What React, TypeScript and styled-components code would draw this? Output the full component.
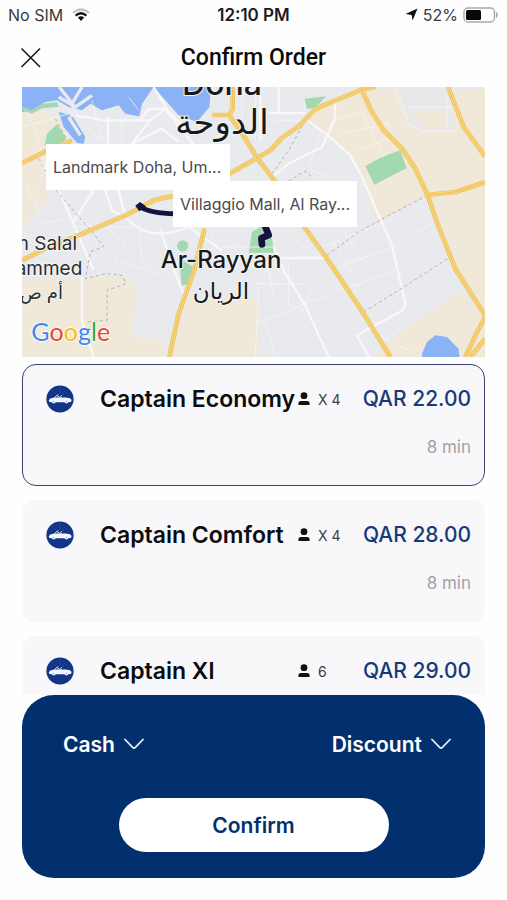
import React, { useState } from "react";
import styled, { createGlobalStyle } from "styled-components";

const NAVY = "#02306e";
const UI = `Inter, "Open Sans", sans-serif`;

const GlobalStyle = createGlobalStyle`
  *, *::before, *::after { box-sizing: border-box; }
  body { margin: 0; background: #fff; font-family: ${UI}; color: #0c0c0f; }
  button, select, input { font: inherit; color: inherit; }
`;

const Screen = styled.div`
  display: flex;
  flex-direction: column;
  height: 100vh;
  padding-bottom: 22px;
  background: #fefefe;
`;

const StatusBar = styled.div`
  display: grid;
  grid-template-columns: 1fr auto 1fr;
  align-items: center;
  height: 29px;
  padding: 0 8px;
  font-size: 16px;
  color: #3a3a3c;
`;

const StatusSide = styled.div<{ $end?: boolean }>`
  display: flex;
  align-items: center;
  justify-content: ${(p) => (p.$end ? "flex-end" : "flex-start")};
  gap: ${(p) => (p.$end ? 5 : 9)}px;
`;

const Clock = styled.time`
  font-size: 17px;
  font-weight: 600;
  color: #1c1c1e;
`;

const Header = styled.header`
  display: grid;
  grid-template-columns: 24px 1fr 24px;
  align-items: center;
  height: 58px;
  padding: 0 19px;
`;

const CloseButton = styled.button`
  display: flex;
  padding: 0;
  border: 0;
  background: none;
  cursor: pointer;
`;

const Title = styled.h1`
  margin: 0;
  font-family: Roboto, sans-serif;
  font-size: 23px;
  font-weight: 500;
  line-height: 28px;
  text-align: center;
  color: #0a0a0a;
`;

const MapFrame = styled.section`
  position: relative;
  flex: none;
  height: 270px;
  margin: 0 22px;
  overflow: hidden;
  background: #e8eaed;

  > svg {
    display: block;
    width: 100%;
    height: 100%;
  }
`;

const PlaceTag = styled.button<{ $left: number; $top: number }>`
  position: absolute;
  left: ${(p) => p.$left}px;
  top: ${(p) => p.$top}px;
  width: 184px;
  height: 46px;
  padding: 0 7px;
  border: 0;
  background: #fff;
  font-size: 16px;
  text-align: left;
  white-space: nowrap;
  color: #4a4a4c;
`;

const RideList = styled.fieldset`
  display: flex;
  flex: 1;
  flex-direction: column;
  gap: 14px;
  min-width: 0;
  min-height: 0;
  margin: 0 22px;
  padding: 7px 0 0;
  border: 0;
  overflow-y: auto;
  scrollbar-width: none;
`;

const RideCard = styled.label<{ $selected: boolean }>`
  position: relative;
  display: grid;
  flex: none;
  grid-template-columns: 28px 224px 1fr auto;
  align-content: start;
  align-items: center;
  height: 122px;
  padding: 18px 13px 0 23px;
  border: 1px solid ${(p) => (p.$selected ? "#3c4374" : "#f8f8fb")};
  border-radius: ${(p) => (p.$selected ? 14 : 12)}px;
  background: #f8f8fb;
  cursor: pointer;
`;

const RideRadio = styled.input`
  position: absolute;
  inset: 0;
  margin: 0;
  opacity: 0;
`;

const RideName = styled.span`
  padding-left: 26px;
  font-size: 23px;
  font-weight: 600;
  line-height: 32px;
  white-space: nowrap;
`;

const Seats = styled.span`
  display: flex;
  align-items: center;
  gap: 8px;
  font-size: 14px;
  color: #3d3d40;
`;

const Price = styled.span`
  font-size: 21px;
  font-weight: 500;
  line-height: 32px;
  white-space: nowrap;
  color: #173a78;
`;

const Eta = styled.span`
  grid-column: 4;
  margin-top: 20px;
  font-size: 17px;
  line-height: 24px;
  text-align: right;
  color: #a3a3a7;
`;

const Checkout = styled.section`
  display: flex;
  flex: none;
  flex-direction: column;
  align-items: center;
  gap: 39px;
  margin: 0 22px;
  padding: 34px 0 26px;
  border-radius: 32px;
  background: ${NAVY};
  color: #fff;
`;

const Options = styled.div`
  display: flex;
  align-self: stretch;
  justify-content: space-between;
  padding: 0 33px 0 41px;
`;

const Picker = styled.label`
  display: flex;
  align-items: center;
  gap: 8px;
`;

const PickerSelect = styled.select`
  appearance: none;
  field-sizing: content;
  height: 30px;
  padding: 0;
  border: 0;
  background: none;
  font-size: 21px;
  font-weight: 600;
  color: #fff;

  option { color: #0c0c0f; }
`;

const ConfirmButton = styled.button`
  width: 70%;
  max-width: 270px;
  height: 54px;
  border: 0;
  border-radius: 27px;
  background: #fff;
  font-size: 21px;
  font-weight: 600;
  color: ${NAVY};
  cursor: pointer;
`;

const WifiIcon = () => (
  <svg width="18" height="14" viewBox="0 0 18 14" fill="none" aria-hidden="true">
    <path d="M1 5 Q9 -2 17 5" stroke="#c4c4c6" strokeWidth="2.2" />
    <path d="M3.6 7.6 Q9 2.9 14.4 7.6" stroke="#111" strokeWidth="2.2" />
    <path d="M5.8 9.6 Q9 7 12.2 9.6 L9 13z" fill="#111" />
  </svg>
);

const LocationIcon = () => (
  <svg width="13" height="13" viewBox="0 0 13 13" aria-hidden="true">
    <path d="M12.5.5 7.6 12.6 6.6 6.9.5 6z" fill="#111" />
  </svg>
);

const BatteryIcon = () => (
  <svg width="36" height="16" viewBox="0 0 36 16" fill="none" aria-hidden="true">
    <rect x="1" y="1" width="30.5" height="14" rx="4" stroke="#a9a9ac" strokeWidth="1.4" />
    <rect x="3" y="3" width="15" height="10" rx="1.5" fill="#080808" />
    <path d="M33.5 5.5q1.8 2.5 0 5z" fill="#a9a9ac" stroke="#a9a9ac" />
  </svg>
);

const CloseIcon = () => (
  <svg width="24" height="24" viewBox="0 0 24 24" fill="none" aria-hidden="true">
    <path d="M2.5 2.5 21 21M21 2.5 2.5 21" stroke="#1b1b1b" strokeWidth="1.6" />
  </svg>
);

const ChevronIcon = () => (
  <svg width="22" height="14" viewBox="0 0 22 14" fill="none" aria-hidden="true">
    <path d="M2 2.5 9.6 10.4Q11 11.6 12.4 10.4L20 2.5" stroke="#e6edf8" strokeWidth="1.8" strokeLinecap="round" />
  </svg>
);

const PersonIcon = () => (
  <svg width="12" height="14" viewBox="0 0 12 14" fill="#111" aria-hidden="true">
    <circle cx="6" cy="3.7" r="3.4" />
    <path d="M.4 13v-1.6Q.4 8.9 3 8.9h6q2.600 0 2.600 2.500V13z" />
  </svg>
);

const CarBadge = () => (
  <svg width="28" height="28" viewBox="0 0 28 28" aria-hidden="true">
    <circle cx="14" cy="14" r="13.6" fill="#123587" />
    <path d="M5 4.5 10 9.500M14 1v8M19 6l-3 4" stroke="#26499c" strokeWidth=".7" />
    <path d="M8.400 12.800Q10 10.300 12.500 9.900M14.200 12.800 15.700 10.300M11.500 12.500l1-1.400 1 1.400" fill="none" stroke="#f4f7ff" strokeWidth=".9" />
    <path
      d="M2.800 15.400 4.200 13.500 8.200 12.500 19 12.600Q23.800 12.900 25.200 14.300L25.500 16.400 23.400 17.300H4.700Q2.800 16.900 2.800 15.400z"
      fill="#f4f7ff"
    />
    <circle cx="7.800" cy="16.500" r="1.900" fill="#f4f7ff" />
    <circle cx="20.400" cy="16.500" r="1.900" fill="#f4f7ff" />
    <circle cx="7.800" cy="16.700" r=".6" fill="#6f86bd" />
    <circle cx="20.400" cy="16.700" r=".6" fill="#6f86bd" />
  </svg>
);

const SAND = "#f0e8d8";
const WATER = "#8ab2f5";
const PARK = "#a3d9b0";

const highways = [
  "M0 228 L78 190 150 160",
  "M0 520 L80 480 175 443 310 385 400 338 455 326",
  "M620 262 L705 213 745 190 780 152 830 118 880 66 940 40 1020 8 1060 0",
  "M1015 0 L1050 75 1085 130 1140 185 1180 245 1215 320 1250 420 1300 545 1350 625 1389 685",
  "M1278 0 L1325 120 1389 208",
  "M1215 324 L1300 315 1389 286",
  "M632 0 L632 65 622 84 570 84",
  "M622 84 L670 155 705 213 765 290 850 425 915 515 1025 680 1105 810",
  "M548 425 L515 555 470 680 442 810",
  "M1389 690 L1365 735 1330 810",
  "M1389 755 L1345 810",
];

const streets = [
  "M160 85 L250 100 385 100 430 66 480 130 530 190",
  "M385 100 L330 170M430 66 L380 66 355 100M258 90V170",
  "M395 0 L440 75 500 130M330 170 L420 125 470 165",
  "M60 230 L120 330 180 470 215 550M180 570V700 L215 810",
  "M290 310 L310 390 Q380 470 500 420 L600 490M415 430 L465 570 485 620",
  "M250 310 L270 370 310 390M215 310 L150 410",
  "M850 95 L930 155 985 205 1020 270 1070 385 1110 475 1150 650 1145 668 1005 745 1040 810",
  "M940 40 L938 95 900 180 800 230 745 275",
  "M740 78 H850M770 0V80M715 30 V160",
  "M755 513 H915M755 480 L790 560 850 655 890 745 920 810",
];

const lanes = [
  "M700 710 L1000 590M560 430 L600 500 750 560",
  "M20 80 L60 200 90 300M0 120 L140 80M40 300 L100 260 130 160",
  "M15 300 L55 380M60 410 L150 390 215 420",
  "M210 40 L240 160M300 100V170M320 30 L350 70M190 120 L250 170",
  "M250 420 L310 470 280 520 400 560M150 420 L330 420M350 400 L360 520 430 580",
  "M620 100 L580 160M650 120 L750 160M660 30V100M700 0V160M760 100H850",
  "M870 250 L905 265 940 240M820 290 L890 300M900 130 L860 240",
  "M940 100 L1020 75 1060 160 1085 210M960 140 L1100 110M1000 190 L1110 150",
  "M1120 0 L1160 110 1195 133 H1300M1275 30V130M1160 60 H1300",
  "M920 440 L990 560M960 420 L1020 520M900 480 L1130 390M950 540 L1110 480 1230 410M990 600 L1140 540",
  "M620 450 L660 520M600 480 H760M780 400 L860 500M700 590 H850M730 520 L760 640M800 530 V660",
  "M1070 770 L1150 720M1060 740 L1180 800",
  "M700 810 L710 600M730 700 L760 810M840 680 L870 600",
];

const borders = [
  "M50 215 L110 320 180 400 215 440 245 478 205 495 190 575 250 560 300 565 312 590 255 610 255 700 190 705",
  "M100 95 L135 160M850 100 L800 190 750 260M800 282 L850 252 872 272",
  "M915 505 L1010 435 1100 385 1215 325M1025 675 L1130 610 1280 513",
];

const CityMap = () => (
  <svg viewBox="0 0 1389 810" preserveAspectRatio="xMidYMid slice" role="img" aria-label="Map of Doha and Ar-Rayyan">
    <rect width="1389" height="810" fill="#e8eaed" />
    <g fill={SAND}>
      <path d="M0 60 L110 90 140 150 75 170V340L0 420z" />
      <path d="M0 580 L190 572 300 565 345 600 330 750 420 760 430 810H0z" />
      <path d="M500 630 L710 632V810H445L480 680z" />
      <path d="M880 66 L1020 8 H1389V685L1290 545 1215 325 1065 410 1020 270 985 205 850 95z" />
      <path d="M1389 600V810H1060L1090 770 1200 690 1315 610 1389 690z" />
    </g>
    <path d="M1120 0H1285L1300 130H1195L1160 110z" fill="#e8e8e8" />
    <path d="M1175 75H1270V120H1200z" fill={SAND} />
    <g fill={WATER}>
      <path d="M0 0H395L360 50 352 88 310 80 290 55 240 70 205 50 180 70 140 60 105 40 70 45 30 70 0 75z" />
      <path d="M395 0H567L562 60 525 105 470 85 435 45z" />
      <path d="M110 75 L150 85 190 150 185 170 165 168 125 120z" />
      <path d="M1200 800 L1215 765 1240 745 1275 750 1310 785 1312 810H1200z" />
    </g>
    <path d="M112 0 L155 55 150 85 205 95M180 0 L150 50M110 30 L160 60 210 25M140 90 L175 145" fill="none" stroke="#e8eaed" strokeWidth="10" />
    <path d="M0 58 L30 70 60 50 105 45 110 60 60 64 30 80 0 68z" fill={PARK} />
    <g fill={PARK}>
      <path d="M68 175 L75 140 105 112 132 152 125 175z" />
      <path d="M848 35 L912 28 880 62 855 66z" />
      <path d="M1030 237 L1080 210 1135 190 1154 243 1057 293z" />
      <circle cx="482" cy="477" r="17" />
      <path d="M474 515 L515 540 500 590 478 598z" />
      <path d="M680 497 L690 435 715 420 750 450 755 497z" />
    </g>
    <g fill="none" stroke="#f8f8f9" strokeLinejoin="round">
      <g strokeWidth="3" opacity=".75">{lanes.map((d) => <path key={d} d={d} />)}</g>
      <g strokeWidth="7">{streets.map((d) => <path key={d} d={d} />)}</g>
    </g>
    <g fill="none" stroke="#b5b5b5" strokeWidth="3" strokeDasharray="10 8">
      {borders.map((d) => <path key={d} d={d} />)}
    </g>
    <g fill="none" strokeLinejoin="round">
      <g stroke="#e9bd5c" strokeWidth="14">{highways.map((d) => <path key={d} d={d} />)}</g>
      <g stroke="#fad678" strokeWidth="10">{highways.map((d) => <path key={d} d={d} />)}</g>
      <g stroke="#e5b656" strokeWidth="2">{highways.map((d) => <path key={d} d={d} />)}</g>
    </g>
    <g fill="none" stroke="#14123f" strokeWidth="15" strokeLinejoin="round">
      <path d="M350 357 Q385 380 460 380" />
      <path d="M728 415 L740 444 718 454 720 472" strokeWidth="20" strokeLinecap="round" />
    </g>
    <path d="M340 356 L354 345 372 358 352 373z" fill="#14123f" />
    <g fontFamily={`Inter, "DejaVu Sans", sans-serif`} fill="#17181a" stroke="#f4f5f6" strokeWidth="6" paintOrder="stroke" strokeLinejoin="round">
      <g textAnchor="middle" fontWeight="500">
        <text x="600" y="24" fontSize="96">Doha</text>
        <text x="600" y="140" fontSize="102" fontWeight="400">الدوحة</text>
        <text x="597" y="542" fontSize="72">Ar-Rayyan</text>
        <text x="597" y="635" fontSize="69" fontWeight="400">الريان</text>
      </g>
      <g textAnchor="end" fill="#2c2d30" fontSize="57">
        <text x="165" y="488">Umm Salal</text>
        <text x="181" y="563">Mohammed</text>
        <text x="-6" y="636" textAnchor="start" fontSize="54">أم ص</text>
      </g>
    </g>
    <text x="28" y="763" fontFamily={`Lato, sans-serif`} fontSize="75" fontWeight="400" stroke="#fff" strokeWidth="5" paintOrder="stroke">
      <tspan fill="#4285f4">G</tspan>
      <tspan fill="#ea4335">o</tspan>
      <tspan fill="#fbbc05">o</tspan>
      <tspan fill="#4285f4">g</tspan>
      <tspan fill="#34a853">l</tspan>
      <tspan fill="#ea4335">e</tspan>
    </text>
  </svg>
);

const rides = [
  { id: "economy", name: "Captain Economy", seats: "X 4", price: "QAR 22.00", eta: "8 min" },
  { id: "comfort", name: "Captain Comfort", seats: "X 4", price: "QAR 28.00", eta: "8 min" },
  { id: "xl", name: "Captain Xl", seats: "6", price: "QAR 29.00", eta: "" },
];

export default function App() {
  const [selected, setSelected] = useState("economy");

  return (
    <>
      <GlobalStyle />
      <Screen>
        <StatusBar>
          <StatusSide>
            No SIM
            <WifiIcon />
          </StatusSide>
          <Clock>12:10 PM</Clock>
          <StatusSide $end>
            <LocationIcon />
            <span>52%</span>
            <BatteryIcon />
          </StatusSide>
        </StatusBar>

        <Header>
          <CloseButton type="button" aria-label="Close">
            <CloseIcon />
          </CloseButton>
          <Title>Confirm Order</Title>
        </Header>

        <MapFrame>
          <CityMap />
          <PlaceTag type="button" $left={24} $top={57}>Landmark Doha, Um...</PlaceTag>
          <PlaceTag type="button" $left={151} $top={94}>Villaggio Mall, Al Ray...</PlaceTag>
        </MapFrame>

        <RideList aria-label="Ride type">
          {rides.map((ride) => (
            <RideCard key={ride.id} $selected={ride.id === selected}>
              <RideRadio
                type="radio"
                name="ride"
                checked={ride.id === selected}
                onChange={() => setSelected(ride.id)}
              />
              <CarBadge />
              <RideName>{ride.name}</RideName>
              <Seats>
                <PersonIcon />
                {ride.seats}
              </Seats>
              <Price>{ride.price}</Price>
              {ride.eta && <Eta>{ride.eta}</Eta>}
            </RideCard>
          ))}
        </RideList>

        <Checkout>
          <Options>
            <Picker>
              <PickerSelect aria-label="Payment method">
                <option>Cash</option>
              </PickerSelect>
              <ChevronIcon />
            </Picker>
            <Picker>
              <PickerSelect aria-label="Discount">
                <option>Discount</option>
              </PickerSelect>
              <ChevronIcon />
            </Picker>
          </Options>
          <ConfirmButton type="button">Confirm</ConfirmButton>
        </Checkout>
      </Screen>
    </>
  );
}
